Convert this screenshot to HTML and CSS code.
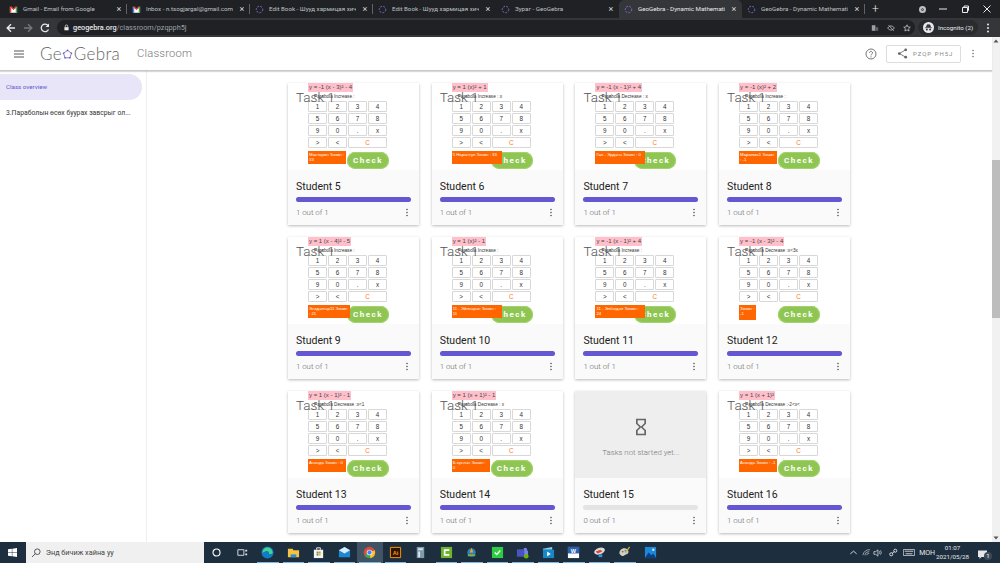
FILE: index.html
```html
<!DOCTYPE html>
<html lang="en">
<head>
<meta charset="utf-8">
<title>GeoGebra Classroom</title>
<link rel="stylesheet" href="styles.css">
</head>
<body>
<div class="tabstrip">
  <div class="tab sep"><svg class="fav" viewBox="0 0 10 10"><path d="M1 2v6.500h8V2L5 5.200z" fill="#fff"/><path d="M1 8.500V2l1.500 1v5.500z" fill="#ea4335"/><path d="M9 8.500V2L7.500 3v5.500z" fill="#34a853"/><path d="M1 2l4 3.200L9 2 7.500 1.500 5 3.500 2.500 1.500z" fill="#ea4335"/></svg><span class="tab-title">Gmail - Email from Google</span><span class="tab-x">×</span></div>
  <div class="tab sep"><svg class="fav" viewBox="0 0 10 10"><path d="M1 2v6.500h8V2L5 5.200z" fill="#fff"/><path d="M1 8.500V2l1.500 1v5.500z" fill="#4285f4"/><path d="M9 8.500V2L7.500 3v5.500z" fill="#34a853"/><path d="M1 2l4 3.200L9 2 7.500 1.500 5 3.500 2.500 1.500z" fill="#ea4335"/></svg><span class="tab-title">Inbox - n.tsogjargal@gmail.com</span><span class="tab-x">×</span></div>
  <div class="tab sep"><svg class="fav" viewBox="0 0 10 10"><circle cx="5" cy="5" r="3.600" class="ggb"/></svg><span class="tab-title">Edit Book - Шууд хармицая хичээл</span><span class="tab-x">×</span></div>
  <div class="tab"><svg class="fav" viewBox="0 0 10 10"><circle cx="5" cy="5" r="3.600" class="ggb"/></svg><span class="tab-title">Edit Book - Шууд хармицая хичээл</span><span class="tab-x">×</span></div>
  <div class="tab"><svg class="fav" viewBox="0 0 10 10"><circle cx="5" cy="5" r="3.600" class="ggb"/></svg><span class="tab-title">Зураг - GeoGebra</span><span class="tab-x">×</span></div>
  <div class="tab active"><svg class="fav" viewBox="0 0 10 10"><circle cx="5" cy="5" r="3.600" class="ggb"/></svg><span class="tab-title">GeoGebra - Dynamic Mathematics</span><span class="tab-x">×</span></div>
  <div class="tab sep"><svg class="fav" viewBox="0 0 10 10"><circle cx="5" cy="5" r="3.600" class="ggb"/></svg><span class="tab-title">GeoGebra - Dynamic Mathematics</span><span class="tab-x">×</span></div>
  <span class="newtab">+</span>
  <span class="winspacer"></span>
  <span class="rec"></span>
  <svg class="winbtn" viewBox="0 0 10 10"><path d="M1 5h8" stroke="#e8eaed"/></svg>
  <svg class="winbtn" viewBox="0 0 10 10"><path d="M2.500 3.500h5v5h-5zM4 3.500V2h4.500v4.500H7.500" fill="none" stroke="#e8eaed"/></svg>
  <svg class="winbtn" viewBox="0 0 10 10"><path d="M1.500 1.500l7 7M8.500 1.500l-7 7" stroke="#e8eaed"/></svg>
</div>
<div class="toolbar">
  <svg class="nav" viewBox="0 0 12 12"><path d="M10 6H2.500M6 2.200L2.200 6 6 9.800" fill="none" stroke="#e8eaed" stroke-width="1.400"/></svg>
  <svg class="nav" viewBox="0 0 12 12"><path d="M2 6h7.500M6 2.200L9.800 6 6 9.800" fill="none" stroke="#75777a" stroke-width="1.400"/></svg>
  <svg class="nav" viewBox="0 0 12 12"><path d="M9.500 7.500A3.800 3.800 0 1 1 9 3.500" fill="none" stroke="#e8eaed" stroke-width="1.300"/><path d="M10 1.500V5H6.500z" fill="#e8eaed"/></svg>
  <div class="omnibox">
    <svg class="lock" viewBox="0 0 10 10"><path d="M2 4.500h6V9H2z" fill="#e8eaed"/><path d="M3.300 4.500V3a1.700 1.700 0 0 1 3.400 0v1.500" fill="none" stroke="#e8eaed"/></svg>
    <span class="url"><b>geogebra.org</b>/classroom/pzqpph5j</span>
    <span class="grow"></span>
    <svg class="omni-ic" viewBox="0 0 10 10"><path d="M1 1.500h4.500v7H1z" fill="#9aa0a6"/><path d="M5.500 4H9v4.500H5.500z" fill="#5f6368"/></svg>
    <svg class="omni-ic" viewBox="0 0 10 10"><path d="M.8 5c2.200-3.400 6.200-3.400 8.400 0-2.200 3.400-6.200 3.400-8.400 0z" fill="none" stroke="#bdc1c6"/><path d="M2 1.500l6.500 7" stroke="#bdc1c6"/></svg>
    <svg class="omni-ic" viewBox="0 0 10 10"><path d="M5 1l1.200 2.700 2.900.3L7 5.900l.6 2.900L5 7.300 2.400 8.800 3 5.900.9 4l2.900-.3z" fill="none" stroke="#e8eaed" stroke-width=".8"/></svg>
  </div>
  <div class="incog">
    <svg class="incog-ic" viewBox="0 0 12 12"><circle cx="6" cy="6" r="6" fill="#e8eaed"/><path d="M2 6.200h8M3.500 6l1-3h3l1 3" fill="#35363a" stroke="#35363a" stroke-width=".7"/><circle cx="4.200" cy="8.300" r="1.100" fill="#35363a"/><circle cx="7.800" cy="8.300" r="1.100" fill="#35363a"/></svg>
    <span>Incognito (2)</span>
  </div>
  <svg class="chrome-dots" viewBox="0 0 4 12"><circle cx="2" cy="2.500" r="1" fill="#e8eaed"/><circle cx="2" cy="6" r="1" fill="#e8eaed"/><circle cx="2" cy="9.500" r="1" fill="#e8eaed"/></svg>
</div>
<div class="app">
  <div class="page">
    <header class="header">
      <svg class="burger" viewBox="0 0 10 8"><path d="M0 1h10M0 4h10M0 7h10" stroke="#555" stroke-width="1"/></svg>
      <span class="logo">Ge<svg class="logo-o" viewBox="0 0 12 12"><path d="M6 1.500l4.300 3.100-1.600 5H3.300l-1.600-5z" fill="none" stroke="#7a74c8" stroke-width="1"/><circle cx="6" cy="1.500" r=".9" fill="#5e5ab0"/><circle cx="10.300" cy="4.600" r=".9" fill="#5e5ab0"/><circle cx="8.700" cy="9.600" r=".9" fill="#5e5ab0"/><circle cx="3.300" cy="9.600" r=".9" fill="#5e5ab0"/><circle cx="1.700" cy="4.600" r=".9" fill="#5e5ab0"/></svg>Gebra</span>
      <span class="classroom">Classroom</span>
      <span class="grow"></span>
      <svg class="help" viewBox="0 0 12 12"><circle cx="6" cy="6" r="5" fill="none" stroke="#666" stroke-width=".9"/><path d="M4.500 4.800a1.500 1.500 0 1 1 2.300 1.300C6.200 6.500 6 6.800 6 7.400" fill="none" stroke="#666" stroke-width=".9"/><circle cx="6" cy="8.800" r=".6" fill="#666"/></svg>
      <div class="code-btn">
        <svg class="share" viewBox="0 0 12 12"><path d="M9.500 2L2.500 6l7 4" fill="none" stroke="#666" stroke-width=".9"/><circle cx="9.500" cy="2" r="1.500" fill="#666"/><circle cx="2.500" cy="6" r="1.500" fill="#666"/><circle cx="9.500" cy="10" r="1.500" fill="#666"/></svg>
        <span>PZQP PH5J</span>
      </div>
      <svg class="hdr-dots" viewBox="0 0 4 12"><circle cx="2" cy="2" r="1" fill="#666"/><circle cx="2" cy="6" r="1" fill="#666"/><circle cx="2" cy="10" r="1" fill="#666"/></svg>
    </header>
    <div class="body">
      <nav class="sidebar">
        <div class="nav-active">Class overview</div>
        <div class="nav-item">3.Параболын өсөх буурах завсрыг ол...</div>
      </nav>
      <main class="grid">

        <article class="card">
          <div class="thumb">
            <span class="task">Task 1</span>
            <div class="formula">y = -1 (x - 3)² - 4</div>
            <div class="label">Parabola Increase :</div>
            <div class="keys"><span>1</span><span>2</span><span>3</span><span>4</span><span>5</span><span>6</span><span>7</span><span>8</span><span>9</span><span>0</span><span>.</span><span>x</span><span>&gt;</span><span>&lt;</span><span class="clear">C</span></div>
            <div class="result"><div class="score">Мастарин Зочин : 33</div><div class="check">Check</div></div>
          </div>
          <div class="foot"><h3>Student 5</h3><div class="bar"><i class="fill"></i></div><div class="meta"><span>1 out of 1</span><svg class="dots" viewBox="0 0 4 12"><circle cx="2" cy="2" r="1.100"/><circle cx="2" cy="6" r="1.100"/><circle cx="2" cy="10" r="1.100"/></svg></div></div>
        </article>

        <article class="card">
          <div class="thumb">
            <span class="task">Task 1</span>
            <div class="formula">y = 1 (x)² + 1</div>
            <div class="label">Parabola Increase : x</div>
            <div class="keys"><span>1</span><span>2</span><span>3</span><span>4</span><span>5</span><span>6</span><span>7</span><span>8</span><span>9</span><span>0</span><span>.</span><span>x</span><span>&gt;</span><span>&lt;</span><span class="clear">C</span></div>
            <div class="result"><div class="score wide">5 Нарантуя Зочин : 33</div><div class="check">Check</div></div>
          </div>
          <div class="foot"><h3>Student 6</h3><div class="bar"><i class="fill"></i></div><div class="meta"><span>1 out of 1</span><svg class="dots" viewBox="0 0 4 12"><circle cx="2" cy="2" r="1.100"/><circle cx="2" cy="6" r="1.100"/><circle cx="2" cy="10" r="1.100"/></svg></div></div>
        </article>

        <article class="card">
          <div class="thumb">
            <span class="task">Task 1</span>
            <div class="formula">y = -1 (x - 1)² + 4</div>
            <div class="label">Parabola Decrease : x</div>
            <div class="keys"><span>1</span><span>2</span><span>3</span><span>4</span><span>5</span><span>6</span><span>7</span><span>8</span><span>9</span><span>0</span><span>.</span><span>x</span><span>&gt;</span><span>&lt;</span><span class="clear">C</span></div>
            <div class="result"><div class="score wide">Гал - Эрдэнэ Зочин : 0</div><div class="check">Check</div></div>
          </div>
          <div class="foot"><h3>Student 7</h3><div class="bar"><i class="fill"></i></div><div class="meta"><span>1 out of 1</span><svg class="dots" viewBox="0 0 4 12"><circle cx="2" cy="2" r="1.100"/><circle cx="2" cy="6" r="1.100"/><circle cx="2" cy="10" r="1.100"/></svg></div></div>
        </article>

        <article class="card">
          <div class="thumb">
            <span class="task">Task 1</span>
            <div class="formula">y = -1 (x)² + 2</div>
            <div class="label">Parabola Increase :</div>
            <div class="keys"><span>1</span><span>2</span><span>3</span><span>4</span><span>5</span><span>6</span><span>7</span><span>8</span><span>9</span><span>0</span><span>.</span><span>x</span><span>&gt;</span><span>&lt;</span><span class="clear">C</span></div>
            <div class="result"><div class="score">Маралма1 Зочин : -1</div><div class="check">Check</div></div>
          </div>
          <div class="foot"><h3>Student 8</h3><div class="bar"><i class="fill"></i></div><div class="meta"><span>1 out of 1</span><svg class="dots" viewBox="0 0 4 12"><circle cx="2" cy="2" r="1.100"/><circle cx="2" cy="6" r="1.100"/><circle cx="2" cy="10" r="1.100"/></svg></div></div>
        </article>

        <article class="card">
          <div class="thumb">
            <span class="task">Task 1</span>
            <div class="formula">y = 1 (x - 4)² - 5</div>
            <div class="label">Parabola Increase :</div>
            <div class="keys"><span>1</span><span>2</span><span>3</span><span>4</span><span>5</span><span>6</span><span>7</span><span>8</span><span>9</span><span>0</span><span>.</span><span>x</span><span>&gt;</span><span>&lt;</span><span class="clear">C</span></div>
            <div class="result"><div class="score mid">Энхдэлгэр11 Зочин : 21</div><div class="check">Check</div></div>
          </div>
          <div class="foot"><h3>Student 9</h3><div class="bar"><i class="fill"></i></div><div class="meta"><span>1 out of 1</span><svg class="dots" viewBox="0 0 4 12"><circle cx="2" cy="2" r="1.100"/><circle cx="2" cy="6" r="1.100"/><circle cx="2" cy="10" r="1.100"/></svg></div></div>
        </article>

        <article class="card">
          <div class="thumb">
            <span class="task">Task 1</span>
            <div class="formula">y = 1 (x)² - 1</div>
            <div class="label">Parabola Increase :</div>
            <div class="keys"><span>1</span><span>2</span><span>3</span><span>4</span><span>5</span><span>6</span><span>7</span><span>8</span><span>9</span><span>0</span><span>.</span><span>x</span><span>&gt;</span><span>&lt;</span><span class="clear">C</span></div>
            <div class="result"><div class="score wide">11 - Эйлнэрэн Зочин : 11</div><div class="check">Check</div></div>
          </div>
          <div class="foot"><h3>Student 10</h3><div class="bar"><i class="fill"></i></div><div class="meta"><span>1 out of 1</span><svg class="dots" viewBox="0 0 4 12"><circle cx="2" cy="2" r="1.100"/><circle cx="2" cy="6" r="1.100"/><circle cx="2" cy="10" r="1.100"/></svg></div></div>
        </article>

        <article class="card">
          <div class="thumb">
            <span class="task">Task 1</span>
            <div class="formula">y = -1 (x - 1)² + 4</div>
            <div class="label">Parabola Increase :</div>
            <div class="keys"><span>1</span><span>2</span><span>3</span><span>4</span><span>5</span><span>6</span><span>7</span><span>8</span><span>9</span><span>0</span><span>.</span><span>x</span><span>&gt;</span><span>&lt;</span><span class="clear">C</span></div>
            <div class="result"><div class="score wide">11 - Элбэгдэл Зочин : 24</div><div class="check">Check</div></div>
          </div>
          <div class="foot"><h3>Student 11</h3><div class="bar"><i class="fill"></i></div><div class="meta"><span>1 out of 1</span><svg class="dots" viewBox="0 0 4 12"><circle cx="2" cy="2" r="1.100"/><circle cx="2" cy="6" r="1.100"/><circle cx="2" cy="10" r="1.100"/></svg></div></div>
        </article>

        <article class="card">
          <div class="thumb">
            <span class="task">Task 1</span>
            <div class="formula">y = -1 (x - 3)² - 4</div>
            <div class="label">Parabola Decrease :x&lt;3x</div>
            <div class="keys"><span>1</span><span>2</span><span>3</span><span>4</span><span>5</span><span>6</span><span>7</span><span>8</span><span>9</span><span>0</span><span>.</span><span>x</span><span>&gt;</span><span>&lt;</span><span class="clear">C</span></div>
            <div class="result"><div class="score narrow">Зочин : -1</div><div class="check">Check</div></div>
          </div>
          <div class="foot"><h3>Student 12</h3><div class="bar"><i class="fill"></i></div><div class="meta"><span>1 out of 1</span><svg class="dots" viewBox="0 0 4 12"><circle cx="2" cy="2" r="1.100"/><circle cx="2" cy="6" r="1.100"/><circle cx="2" cy="10" r="1.100"/></svg></div></div>
        </article>

        <article class="card">
          <div class="thumb">
            <span class="task">Task 1</span>
            <div class="formula">y = 1 (x - 1)² - 1</div>
            <div class="label">Parabola Decrease :x&lt;1</div>
            <div class="keys"><span>1</span><span>2</span><span>3</span><span>4</span><span>5</span><span>6</span><span>7</span><span>8</span><span>9</span><span>0</span><span>.</span><span>x</span><span>&gt;</span><span>&lt;</span><span class="clear">C</span></div>
            <div class="result"><div class="score">Ананда Зочин : 0</div><div class="check">Check</div></div>
          </div>
          <div class="foot"><h3>Student 13</h3><div class="bar"><i class="fill"></i></div><div class="meta"><span>1 out of 1</span><svg class="dots" viewBox="0 0 4 12"><circle cx="2" cy="2" r="1.100"/><circle cx="2" cy="6" r="1.100"/><circle cx="2" cy="10" r="1.100"/></svg></div></div>
        </article>

        <article class="card">
          <div class="thumb">
            <span class="task">Task 1</span>
            <div class="formula">y = 1 (x + 1)² - 1</div>
            <div class="label">Parabola Decrease : x</div>
            <div class="keys"><span>1</span><span>2</span><span>3</span><span>4</span><span>5</span><span>6</span><span>7</span><span>8</span><span>9</span><span>0</span><span>.</span><span>x</span><span>&gt;</span><span>&lt;</span><span class="clear">C</span></div>
            <div class="result"><div class="score">Б.хүслэн Зочин : 0</div><div class="check">Check</div></div>
          </div>
          <div class="foot"><h3>Student 14</h3><div class="bar"><i class="fill"></i></div><div class="meta"><span>1 out of 1</span><svg class="dots" viewBox="0 0 4 12"><circle cx="2" cy="2" r="1.100"/><circle cx="2" cy="6" r="1.100"/><circle cx="2" cy="10" r="1.100"/></svg></div></div>
        </article>

        <article class="card">
          <div class="thumb empty">
            <svg class="hourglass" viewBox="0 0 24 24"><path d="M6 2v6h.01L6 8.010 10 12l-4 4 .01.01H6V22h12v-5.990h-.01L18 16l-4-4 4-3.990-.01-.01H18V2H6zm10 14.500V20H8v-3.500l4-4 4 4zm-4-5l-4-4V4h8v3.500l-4 4z"/></svg>
            <span>Tasks not started yet...</span>
          </div>
          <div class="foot"><h3>Student 15</h3><div class="bar"></div><div class="meta"><span>0 out of 1</span><svg class="dots" viewBox="0 0 4 12"><circle cx="2" cy="2" r="1.100"/><circle cx="2" cy="6" r="1.100"/><circle cx="2" cy="10" r="1.100"/></svg></div></div>
        </article>

        <article class="card">
          <div class="thumb">
            <span class="task">Task 1</span>
            <div class="formula">y = 1 (x + 1)²</div>
            <div class="label">Parabola Decrease :-2&lt;x&lt;</div>
            <div class="keys"><span>1</span><span>2</span><span>3</span><span>4</span><span>5</span><span>6</span><span>7</span><span>8</span><span>9</span><span>0</span><span>.</span><span>x</span><span>&gt;</span><span>&lt;</span><span class="clear">C</span></div>
            <div class="result"><div class="score">Ананда Зочин : -1</div><div class="check">Check</div></div>
          </div>
          <div class="foot"><h3>Student 16</h3><div class="bar"><i class="fill"></i></div><div class="meta"><span>1 out of 1</span><svg class="dots" viewBox="0 0 4 12"><circle cx="2" cy="2" r="1.100"/><circle cx="2" cy="6" r="1.100"/><circle cx="2" cy="10" r="1.100"/></svg></div></div>
        </article>

      </main>
    </div>
  </div>
  <div class="scrollbar">
    <svg class="sb-arrow" viewBox="0 0 8 8"><path d="M4 2.500L6.500 5.500h-5z" fill="#555"/></svg>
    <div class="sb-thumb"></div>
    <span class="grow"></span>
    <svg class="sb-arrow" viewBox="0 0 8 8"><path d="M4 5.500L6.500 2.500h-5z" fill="#555"/></svg>
  </div>
</div>
<footer class="taskbar">
  <svg class="start" viewBox="0 0 10 10"><path d="M0 1.400L4.300.8v3.900H0zM4.800.7L10 0v4.700H4.800zM0 5.300h4.300v3.900L0 8.600zM4.800 5.300H10V10l-5.200-.7z" fill="#fff"/></svg>
  <div class="search">
    <svg class="search-ic" viewBox="0 0 10 10"><circle cx="6.300" cy="3.700" r="2.800" fill="none" stroke="#333" stroke-width=".8"/><path d="M4.300 5.700L1 9" stroke="#333" stroke-width=".8"/></svg>
    <span>Энд бичиж хайна уу</span>
  </div>
  <div class="apps">
    <span class="app-ic"><svg viewBox="0 0 14 14"><circle cx="7" cy="7" r="3.800" fill="none" stroke="#fff" stroke-width="1.200"/></svg></span>
    <span class="app-ic"><svg viewBox="0 0 14 14"><path d="M2 4h6.500v6H2z" fill="none" stroke="#dfe3e6"/><path d="M10 4h2v2h-2zM10 8h2v2h-2z" fill="#dfe3e6"/></svg></span>
    <span class="app-ic on"><svg viewBox="0 0 14 14"><circle cx="7" cy="7" r="6.500" fill="#0f7cc4"/><path d="M1.500 7a5.500 5.500 0 0 1 11 0c0 1.500-2 1.800-4 1.500 1-2-1-3.500-3-3-2 .5-3 2-4 1.500z" fill="#45d28e"/></svg></span>
    <span class="app-ic on"><svg viewBox="0 0 14 14"><path d="M1 3h5l1 1.500h6V12H1z" fill="#f5c242"/><path d="M4 9h6v3H4z" fill="#2a8fd8"/></svg></span>
    <span class="app-ic on"><svg viewBox="0 0 14 14"><path d="M2 4h10v9H2z" fill="#f4f4f4"/><path d="M5 4V2h4v2" fill="none" stroke="#f4f4f4"/><path d="M5 6h2v2H5z" fill="#e8542c"/><path d="M7.300 6h2v2h-2z" fill="#7fba00"/><path d="M5 8.300h2v2H5z" fill="#1e90e0"/><path d="M7.300 8.300h2v2h-2z" fill="#ffb900"/></svg></span>
    <span class="app-ic on"><svg viewBox="0 0 14 14"><path d="M1 4.500L7 1l6 3.500V12H1z" fill="#1c88d4"/><path d="M1 4.500L7 8l6-3.500L7 1z" fill="#d9eefa"/></svg></span>
    <span class="app-ic current"><svg viewBox="0 0 14 14"><circle cx="7" cy="7" r="6.200" fill="#dd4b39"/><path d="M7 7L1.600 10a6.200 6.200 0 0 0 8 2.400z" fill="#3ba84f"/><path d="M7 7l5.600-2.300A6.200 6.200 0 0 1 8 13.100z" fill="#fbc02d"/><circle cx="7" cy="7" r="3" fill="#fff"/><circle cx="7" cy="7" r="2.300" fill="#4285f4"/></svg></span>
    <span class="app-ic on"><svg viewBox="0 0 14 14"><path d="M1.500 1.500h11v11h-11z" fill="#2e1400" stroke="#ff9a00"/><text x="7" y="9.500" class="ai">Ai</text></svg></span>
    <span class="app-ic"><svg viewBox="0 0 14 14"><path d="M3 1h8v12H3z" fill="#7f9cae"/><path d="M4.500 2.500h5v2h-5z" fill="#dbe6ec"/><path d="M4.500 6h2v6h-2z" fill="#dbe6ec"/></svg></span>
    <span class="app-ic on"><svg viewBox="0 0 14 14"><path d="M1 1h12v12H1z" fill="#6cb52d"/><path d="M10 4.500H5v5h5" fill="none" stroke="#fff" stroke-width="1.800"/></svg></span>
    <span class="app-ic on"><svg viewBox="0 0 14 14"><circle cx="7" cy="7" r="4.500" fill="#2c7fb8"/><path d="M7 2l2 5H5z" fill="#f0a030"/><path d="M3 9h8v2H3z" fill="#7db23f"/></svg></span>
    <span class="app-ic on"><svg viewBox="0 0 14 14"><path d="M1 1h12v12H1z" fill="#2ecc40"/><path d="M4 7l2.200 2.200L10 4.800" fill="none" stroke="#fff" stroke-width="1.400"/></svg></span>
    <span class="app-ic on"><svg viewBox="0 0 14 14"><circle cx="10" cy="4" r="2" fill="#7b83eb"/><path d="M7 5h6v6H7z" fill="#7b83eb"/><path d="M1 3.500h8v8H1z" fill="#4b53bc"/><circle cx="11" cy="11" r="2.500" fill="#6bb700"/></svg></span>
    <span class="app-ic on"><svg viewBox="0 0 14 14"><path d="M1 3l10-2v3H1z" fill="#8ad0f2"/><path d="M1 4h12v9H1z" fill="#1688c9"/><path d="M5.500 6l4 2.500-4 2.500z" fill="#fff"/></svg></span>
    <span class="app-ic on"><svg viewBox="0 0 14 14"><path d="M1 1h12v12H1z" fill="#fff"/><path d="M1 1h12v7H1z" fill="#2b5fb4"/><text x="7" y="7" class="wd">W</text></svg></span>
    <span class="app-ic on"><svg viewBox="0 0 14 14"><ellipse cx="7" cy="5.500" rx="6" ry="3.500" fill="#d8d8d8" transform="rotate(-18 7 5.500)"/><path d="M3 6l5-2 2 2-5 2z" fill="#d9453a"/><path d="M6 9h4v3H6z" fill="#3d8fd6"/></svg></span>
    <span class="app-ic on"><svg viewBox="0 0 14 14"><path d="M1.500 8c0-3.500 3-6 6-5.500 3 .5 4.500 3 3.500 5s-3 1-4 2.500-3.500 1-5.500-2z" fill="#c8d5c0"/><circle cx="5" cy="6" r="1" fill="#d9453a"/><circle cx="8" cy="5" r="1" fill="#3d8fd6"/><path d="M12.500 1L8 7.500" stroke="#e8a33d" stroke-width="1.300"/></svg></span>
    <span class="app-ic"><svg viewBox="0 0 14 14"><path d="M1 1h12v12H1z" fill="#1e88d8"/><path d="M1 13l4-6 3 3 2-2 3 5z" fill="#0c3f7f"/><circle cx="10" cy="4" r="1.300" fill="#c9e8fb"/></svg></span>
  </div>
  <span class="grow"></span>
  <div class="tray">
    <svg class="tray-ic" viewBox="0 0 10 10"><path d="M1.500 6.500L5 3.500l3.500 3" fill="none" stroke="#e6e6e6"/></svg>
    <svg class="tray-ic" viewBox="0 0 10 10"><path d="M1 8a7 7 0 0 1 8-6M3 8a5 5 0 0 1 5-4M5 8a3 3 0 0 1 3-2" fill="none" stroke="#c8c8c8" stroke-width=".8"/></svg>
    <svg class="tray-ic" viewBox="0 0 10 10"><path d="M1 4h2l2.500-2v7L3 7H1z" fill="none" stroke="#e6e6e6" stroke-width=".8"/><path d="M7 3.500a2.500 2.500 0 0 1 0 3M8.300 2.500a4 4 0 0 1 0 5" fill="none" stroke="#e6e6e6" stroke-width=".7"/></svg>
    <svg class="tray-ic" viewBox="0 0 10 10"><circle cx="2.500" cy="7" r="1.700" fill="none" stroke="#e6e6e6"/><circle cx="7" cy="3" r="1.700" fill="none" stroke="#e6e6e6"/><path d="M3.500 6l2.500-2" stroke="#e6e6e6"/></svg>
    <svg class="kbd" viewBox="0 0 14 9"><path d="M.5 1h13v7H.5z" fill="none" stroke="#e6e6e6" stroke-width=".8"/><path d="M2 3h10M3 6h8" stroke="#e6e6e6"/></svg>
    <span class="lang">МОН</span>
    <div class="clock"><span>01:07</span><span>2021/05/28</span></div>
    <span class="notif"><svg viewBox="0 0 12 12"><path d="M1 1.500h9V8H4.500L2.500 10V8H1z" fill="#e6e6e6"/></svg><b>1</b></span>
  </div>
</footer>
</body>
</html>
```

FILE: styles.css
```css
* { box-sizing: border-box; }
html, body { margin: 0; height: 100%; }
body {
  width: 1000px;
  height: 563px;
  overflow: hidden;
  display: flex;
  flex-direction: column;
  font-family: Roboto, "Noto Sans", sans-serif;
  background: #fff;
}
.grow { flex: 1; }

/* browser chrome */
.tabstrip {
  flex: 0 0 18px;
  display: grid;
  grid-template-columns: repeat(7, 123px) 20px 1fr 19px 22px 22px 18px;
  align-items: center;
  padding-left: 4px;
  background: #202124;
  color: #bdc1c6;
  font-size: 6.200px;
}
.tab {
  height: 18px;
  min-width: 0;
  display: flex;
  align-items: center;
  padding: 0 4px 0 5px;
  gap: 5px;
  position: relative;
}
.tab.sep::after {
  content: "";
  position: absolute;
  right: 0;
  top: 4px;
  bottom: 4px;
  width: 1px;
  background: #5f6368;
}
.tab.active {
  background: #35363a;
  color: #e8eaed;
  border-radius: 5px 5px 0 0;
}
.fav { flex: 0 0 9px; width: 9px; height: 9px; }
.ggb { fill: none; stroke: #7f7be0; stroke-width: 1; stroke-dasharray: 2 1.500; }
.tab-title { flex: 1 1 0; width: 0; min-width: 0; white-space: nowrap; overflow: hidden; }
.tab-x { flex: 0 0 8px; font-size: 9px; color: #d5d7da; text-align: center; }
.newtab { font-size: 12px; font-weight: 300; color: #e8eaed; padding-left: 7px; }
.rec { width: 7px; height: 7px; border-radius: 50%; background: #bdc1c6; border: 2px solid #bdc1c6; box-shadow: inset 0 0 0 1px #444; }
.winbtn { width: 10px; height: 10px; }

.toolbar {
  flex: 0 0 19px;
  display: flex;
  align-items: center;
  padding-left: 5px;
  background: #35363a;
}
.nav { flex: 0 0 12px; width: 12px; height: 12px; margin-right: 5px; }
.omnibox {
  flex: 0 0 858px;
  height: 15px;
  margin-left: 1px;
  display: flex;
  align-items: center;
  padding: 0 4px 0 6px;
  border-radius: 8px;
  background: #202124;
}
.lock { width: 7px; height: 7px; margin-right: 3px; }
.url { font-size: 7.300px; color: #9aa0a6; white-space: nowrap; }
.url b { color: #e8eaed; font-weight: 500; }
.omni-ic { width: 8px; height: 8px; margin-left: 8px; }
.incog {
  flex: 0 0 60px;
  height: 15px;
  margin-left: 3px;
  display: flex;
  align-items: center;
  gap: 4px;
  padding-left: 5px;
  border-radius: 8px;
  background: #2a2b2f;
  color: #e8eaed;
  font-size: 6.200px;
  white-space: nowrap;
}
.incog-ic { width: 11px; height: 11px; }
.chrome-dots { width: 4px; height: 12px; margin-left: 8px; }

/* application area */
.app { flex: 1; min-height: 0; display: flex; }
.page { flex: 1; min-width: 0; display: flex; flex-direction: column; }
.header {
  flex: 0 0 34px;
  display: flex;
  align-items: center;
  padding-left: 14px;
  border-bottom: 1px solid #c8c8c8;
  box-shadow: 0 1px 1px rgba(0,0,0,.15);
  position: relative;
  z-index: 2;
  background: #fff;
  color: #6f6f6f;
}
.burger { width: 10px; height: 8px; margin-right: 16px; }
.logo {
  font-family: Lato, Roboto, sans-serif;
  font-weight: 300;
  font-size: 17px;
  letter-spacing: .3px;
  color: #666;
  white-space: nowrap;
  display: flex;
  align-items: center;
}
.logo-o { width: 11px; height: 11px; margin: 2px .5px 0; }
.classroom { margin-left: 17px; font-size: 11.200px; font-weight: 300; color: #777; letter-spacing: .2px; }
.help { width: 12px; height: 12px; margin-right: 9px; }
.code-btn {
  flex: 0 0 75px;
  height: 18px;
  display: flex;
  align-items: center;
  gap: 5px;
  padding-left: 10px;
  border: 1px solid #ddd;
  border-radius: 2px;
  color: #8a8a8a;
  font-size: 6px;
  letter-spacing: 1px;
}
.share { width: 11px; height: 11px; }
.hdr-dots { width: 4px; height: 9px; margin: 0 17px 0 10px; }

.body { flex: 1; min-height: 0; display: flex; }
.sidebar {
  flex: 0 0 147px;
  border-right: 1px solid #eee;
  padding-top: 3px;
}
.nav-active {
  width: 142px;
  height: 26px;
  display: flex;
  align-items: center;
  padding-left: 6px;
  background: #e8e5f8;
  border-radius: 0 13px 13px 0;
  color: #6557d2;
  font-size: 6.200px;
}
.nav-item {
  height: 25px;
  display: flex;
  align-items: center;
  padding-left: 6px;
  font-size: 6.800px;
  color: #333;
  white-space: nowrap;
}

.grid {
  flex: 1;
  min-width: 0;
  display: grid;
  grid-template-columns: repeat(4, 131px);
  grid-auto-rows: 142px;
  column-gap: 12.700px;
  row-gap: 12px;
  padding: 12px 0 0 141px;
  overflow: hidden;
  align-content: start;
}
.card {
  display: flex;
  flex-direction: column;
  background: #fff;
  box-shadow: 0 1px 3px rgba(0,0,0,.28);
  border-radius: 1px;
}
.thumb {
  flex: 0 0 87px;
  position: relative;
  padding-left: 20px;
}
.task {
  position: absolute;
  left: 8px;
  top: 6px;
  font-size: 13.500px;
  font-weight: 300;
  color: #555;
  white-space: nowrap;
}
.formula {
  width: fit-content;
  height: 9px;
  padding: 0 1px;
  background: #ffc0cb;
  font-family: "Liberation Sans", sans-serif;
  font-size: 6px;
  line-height: 9px;
  color: #444;
}
.label {
  height: 9px;
  padding-left: 6px;
  font-family: "Liberation Sans", sans-serif;
  font-size: 4.700px;
  line-height: 9px;
  color: #333;
  white-space: nowrap;
}
.keys {
  display: grid;
  grid-template-columns: repeat(4, 19px);
  grid-auto-rows: 11px;
  gap: 1px;
  font-family: "Liberation Sans", sans-serif;
}
.keys span {
  display: flex;
  align-items: center;
  justify-content: center;
  background: #fff;
  border: 1px solid #d8d8d8;
  border-radius: 1px;
  font-size: 6.300px;
  color: #333;
}
.keys .clear { grid-column: span 2; color: #ff7a1a; }
.result {
  position: relative;
  height: 18px;
  margin-top: 3px;
  width: 81px;
}
.score {
  position: relative;
  z-index: 1;
  width: 38px;
  height: 13px;
  padding: 1px;
  background: #ff6600;
  color: #fff;
  font-family: "Liberation Sans", sans-serif;
  font-size: 4.300px;
  line-height: 5px;
}
.score.wide { width: 50px; }
.score.mid { width: 42px; }
.score.narrow { width: 17px; height: 15px; }
.check {
  position: absolute;
  right: 0;
  top: 1px;
  width: 42px;
  height: 17px;
  display: flex;
  align-items: center;
  justify-content: center;
  border-radius: 9px;
  background: #8fc653;
  color: #fff;
  font-size: 8px;
  font-weight: 700;
  letter-spacing: 1.500px;
  box-shadow: inset 0 0 0 1px #a5d36b;
}
.thumb.empty {
  padding: 0;
  display: flex;
  flex-direction: column;
  align-items: center;
  background: #eee;
  font-size: 7.800px;
  font-weight: 300;
  color: #777;
}
.hourglass { width: 20px; height: 20px; margin: 26px 0 11px; fill: #666; }
.foot {
  flex: 1;
  background: #fafafa;
  padding: 10px 8px 0;
}
.foot h3 {
  margin: 0;
  height: 13px;
  font-size: 10.500px;
  line-height: 13px;
  font-weight: 400;
  color: #222;
  white-space: nowrap;
}
.bar {
  height: 5px;
  margin-top: 4px;
  border-radius: 3px;
  background: #e4e4e4;
  display: flex;
}
.fill { flex: 1; border-radius: 3px; background: #6557d2; }
.meta {
  height: 12px;
  margin-top: 4px;
  display: flex;
  align-items: center;
  justify-content: space-between;
  font-size: 7.800px;
  font-weight: 300;
  color: #666;
  padding-right: 2px;
}
.dots { width: 4px; height: 9px; fill: #555; }

.scrollbar {
  flex: 0 0 8px;
  display: flex;
  flex-direction: column;
  background: #f1f1f1;
}
.sb-arrow { flex: 0 0 8px; width: 8px; height: 8px; }
.sb-thumb { height: 158px; margin-top: 115px; background: #bdbdbd; }

/* taskbar */
.taskbar {
  flex: 0 0 21px;
  display: flex;
  align-items: center;
  background: #1d2f3f;
  color: #e6e6e6;
}
.start { width: 9px; height: 9px; margin: 0 9px 0 8px; }
.search {
  flex: 0 0 178px;
  height: 21px;
  display: flex;
  align-items: center;
  gap: 5px;
  padding-left: 5px;
  background: #f0f0f0;
  color: #444;
  font-size: 7.300px;
}
.search-ic { width: 10px; height: 10px; }
.apps { display: flex; }
.app-ic {
  flex: 0 0 25.500px;
  height: 21px;
  display: flex;
  align-items: center;
  justify-content: center;
  position: relative;
}
.app-ic svg { width: 13px; height: 13px; }
.app-ic.on::after, .app-ic.current::after {
  content: "";
  position: absolute;
  left: 2px;
  right: 2px;
  bottom: 0;
  height: 1px;
  background: #76b9ed;
}
.app-ic.current { background: #3f5565; }
.ai { font: 700 6px "Liberation Sans", sans-serif; fill: #ff9a00; text-anchor: middle; }
.wd { font: 700 6px "Liberation Sans", sans-serif; fill: #fff; text-anchor: middle; }
.tray { display: flex; align-items: center; }
.tray-ic { width: 9px; height: 9px; margin-right: 4px; }
.tray-ic:nth-child(2) { margin-right: 2px; }
.tray-ic:nth-child(3) { margin-right: 7px; }
.tray-ic:nth-child(4) { margin-right: 5px; }
.kbd { width: 12px; height: 9px; margin-right: 4px; }
.lang { font-size: 7px; margin-right: 0; }
.clock {
  display: flex;
  flex-direction: column;
  align-items: center;
  font-size: 6.200px;
  line-height: 9px;
  margin: 0 8px 0 1px;
}
.notif { position: relative; width: 14px; height: 14px; margin-right: 9px; }
.notif svg { width: 12px; height: 12px; }
.notif b {
  position: absolute;
  right: -1px;
  bottom: 0;
  width: 8px;
  height: 8px;
  border-radius: 50%;
  background: #3b4a57;
  font-size: 6px;
  font-weight: 400;
  line-height: 8px;
  text-align: center;
  color: #fff;
}
```
